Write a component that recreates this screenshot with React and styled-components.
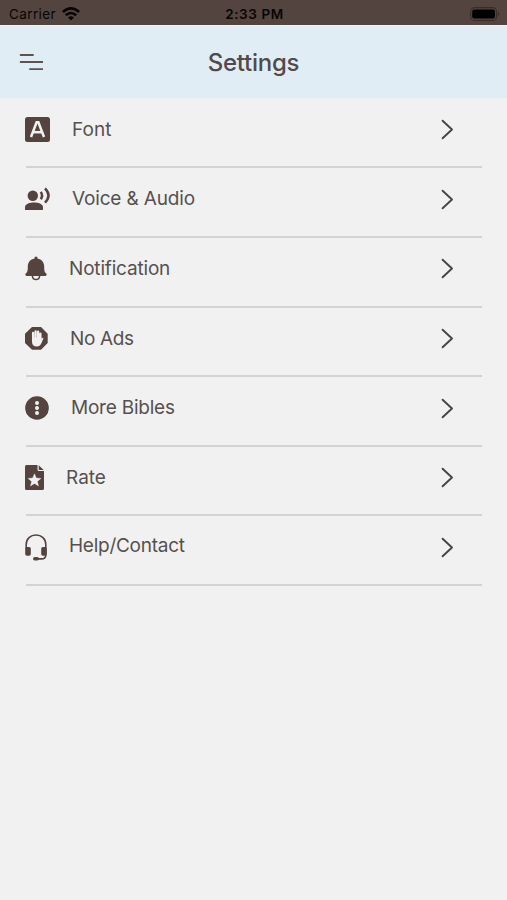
import React from 'react';
import styled, { createGlobalStyle } from 'styled-components';

const items = [
    { label: 'Font', icon: FontIcon, width: 25, spacing: 0.05 },
    { label: 'Voice & Audio', icon: VoiceIcon, width: 25, spacing: -0.16 },
    { label: 'Notification', icon: BellIcon, width: 22, spacing: -0.18 },
    { label: 'No Ads', icon: HandIcon, width: 23, spacing: -0.35 },
    { label: 'More Bibles', icon: MoreIcon, width: 24, spacing: -0.22 },
    { label: 'Rate', icon: RateIcon, width: 19, spacing: 0 },
    { label: 'Help/Contact', icon: HeadsetIcon, width: 22, spacing: -0.26, lift: 3 },
];

function FontIcon() {
    return (
        <svg width="25" height="25" viewBox="0 0 25 25">
            <rect width="25" height="25" rx="2.5" fill="#54433f" />
            <g fill="none" stroke="#f1f1f1" strokeWidth="2.5">
                <path d="M6 20 L11.6 5.3 H13.4 L19 20" />
                <path d="M8.2 15.2 H16.8" />
            </g>
        </svg>
    );
}

function VoiceIcon() {
    return (
        <svg width="25" height="25" viewBox="0 0 25 25">
            <circle cx="7.8" cy="8.7" r="5.2" fill="#54433f" />
            <path d="M0 23 V20.2 C0 16.8 5.2 15.6 9 15.6 S18 16.8 18 20.2 V23 Z" fill="#54433f" />
            <g fill="none" stroke="#54433f" strokeWidth="2.5">
                <path d="M15.8 4.9 Q18.3 8.5 15.8 12.2" />
                <path d="M20 1.4 Q27 8.5 20 15.6" />
            </g>
        </svg>
    );
}

function BellIcon() {
    return (
        <svg width="22" height="25" viewBox="0 0 22 25">
            <path
                d="M11 .6 C12 .6 12.5 1.4 12.5 2.4 C16.8 3.1 19.2 6.4 19.2 10.5 C19.2 15 19.7 16.2 21.2 17.5 C22.2 18.5 21.5 20 20.3 20 H1.7 C.5 20 -.2 18.5 .8 17.5 C2.3 16.2 2.8 15 2.8 10.5 C2.8 6.4 5.2 3.1 9.5 2.4 C9.5 1.4 10 .6 11 .6 Z"
                fill="#54433f"
            />
            <path d="M7.4 20 C7.6 24.7 14.4 24.7 14.6 20" fill="none" stroke="#54433f" strokeWidth="1.5" />
        </svg>
    );
}

function HandIcon() {
    return (
        <svg width="23" height="23" viewBox="0 0 23 23">
            <path d="M7 0 H16 L22.7 6.7 V16 L16 22.7 H7 L0 16 V6.7 Z" fill="#54433f" />
            <path
                d="M8.1 6 V13 M10.6 4.5 V13 M13.1 4.7 V13 M15.4 6.7 V14"
                stroke="#f1f1f1"
                strokeWidth="2.3"
                strokeLinecap="round"
            />
            <path
                d="M7 10.5 H16.5 V13.6 L17 11.3 Q18 10.2 18.5 11.3 L16.5 16 Q15 19.5 11.8 19.5 Q7 19.5 7 14.5 Z"
                fill="#f1f1f1"
            />
        </svg>
    );
}

function MoreIcon() {
    return (
        <svg width="24" height="24" viewBox="0 0 24 24">
            <circle cx="12" cy="12" r="11.8" fill="#54433f" />
            <g fill="#f1f1f1">
                <circle cx="12" cy="6.9" r="2" />
                <circle cx="12" cy="12" r="2" />
                <circle cx="12" cy="17.1" r="2" />
            </g>
        </svg>
    );
}

function RateIcon() {
    return (
        <svg width="19" height="25" viewBox="0 0 19 25">
            <path d="M1.5 0 H12.5 V4.5 Q12.5 6 14 6 H19 V23.5 Q19 25 17.5 25 H1.5 Q0 25 0 23.5 V1.5 Q0 0 1.5 0 Z" fill="#54433f" />
            <path d="M13.7 .3 L18.7 5 H14.5 Q13.7 5 13.7 4.2 Z" fill="#54433f" />
            <path
                d="M9.5 8.8 L11.3 13 L15.9 13.4 L12.4 16.4 L13.5 20.9 L9.5 18.5 L5.5 20.9 L6.6 16.4 L3.1 13.4 L7.7 13 Z"
                fill="#f1f1f1"
                stroke="#f1f1f1"
                strokeWidth=".4"
                strokeLinejoin="round"
            />
        </svg>
    );
}

function HeadsetIcon() {
    return (
        <svg width="22" height="27" viewBox="0 0 22 27">
            <path
                d="M1.2 15 V10.5 C1.2 5 5.5 1 11 1 S20.8 5 20.8 10.5 V21 Q20.8 24.9 16.5 24.9 H11"
                fill="none"
                stroke="#54433f"
                strokeWidth="1.6"
            />
            <rect x="0.2" y="13" width="5.6" height="8.8" rx="1.7" fill="#54433f" />
            <rect x="16.2" y="13" width="5.6" height="8.8" rx="1.7" fill="#54433f" />
            <rect x="8" y="23" width="6" height="3.6" rx="1.8" fill="#54433f" />
        </svg>
    );
}

const App = () => {
    return (
        <Screen>
            <GlobalStyle />
            <StatusBar>
                <Carrier>
                    <span>Carrier</span>
                    <svg width="18" height="14" viewBox="0 0 18 14">
                        <g fill="none" stroke="#080504" strokeWidth="2.6">
                            <path d="M.9 5 Q9 -2.2 17.1 5" />
                            <path d="M3.8 8.3 Q9 3.7 14.2 8.3" />
                        </g>
                        <path d="M6.1 10.4 Q9 8 11.9 10.4 L9 13.4 Z" fill="#080504" />
                    </svg>
                </Carrier>
                <Clock>2:33 PM</Clock>
                <Battery>
                    <svg width="30" height="14" viewBox="0 0 30 14">
                        <rect x=".6" y=".6" width="26" height="12.8" rx="4" fill="none" stroke="#382d29" strokeWidth="1.1" />
                        <rect x="2.2" y="2.4" width="22.8" height="9.2" rx="2" fill="#000" />
                        <path d="M28 4.8 Q30.4 7 28 9.2 Z" fill="#382d29" />
                    </svg>
                </Battery>
            </StatusBar>
            <Header>
                <MenuButton aria-label="Menu">
                    <svg width="24" height="18" viewBox="0 0 24 18">
                        <path
                            d="M1.6 2 H14 M1.6 9 H23.6 M11 16.2 H23.6"
                            stroke="#5d5252"
                            strokeWidth="1.8"
                            strokeLinecap="round"
                        />
                    </svg>
                </MenuButton>
                <Title>Settings</Title>
            </Header>
            <List>
                {items.map(({ label, icon: Icon, width, spacing, lift }) => (
                    <Row key={label}>
                        <IconBox $width={width}>
                            <Icon />
                        </IconBox>
                        <Label $spacing={spacing} $lift={lift}>{label}</Label>
                        <Chevron width="13" height="21" viewBox="0 0 13 21">
                            <path
                                d="M1.6 1.7 L11 10.5 L1.6 19.3"
                                fill="none"
                                stroke="#494443"
                                strokeWidth="1.9"
                                strokeLinecap="round"
                                strokeLinejoin="round"
                            />
                        </Chevron>
                    </Row>
                ))}
            </List>
        </Screen>
    );
};

// Styled components
const GlobalStyle = createGlobalStyle`
  body {
    margin: 0;
    background: #f1f1f1;
  }
`;

const Screen = styled.div`
  min-height: 100vh;
  background: #f1f1f1;
  font-family: Inter, sans-serif;
`;

const StatusBar = styled.div`
  display: grid;
  grid-template-columns: 1fr auto 1fr;
  align-items: center;
  height: 25px;
  padding: 2px 7px 0 9px;
  box-sizing: border-box;
  background: #54443f;
  color: #080504;
  font-size: 13.5px;
`;

const Carrier = styled.div`
  display: flex;
  align-items: center;
  gap: 6px;
  letter-spacing: 0.38px;
`;

const Clock = styled.div`
  font-weight: 600;
  letter-spacing: 0.6px;
`;

const Battery = styled.div`
  display: flex;
  justify-content: flex-end;
`;

const Header = styled.header`
  display: grid;
  grid-template-columns: 1fr auto 1fr;
  align-items: center;
  height: 73px;
  padding: 0 19px;
  box-sizing: border-box;
  border-top: 1px solid #eef2f4;
  background: #e0edf5;
`;

const MenuButton = styled.button`
  display: flex;
  padding: 0;
  border: none;
  background: none;
`;

const Title = styled.h1`
  margin: 0;
  color: #51494a;
  font-size: 24px;
  font-weight: 500;
  letter-spacing: -0.25px;
`;

const List = styled.div`
  padding: 0.6px 25px 0 26px;
`;

const Row = styled.div`
  display: flex;
  align-items: center;
  height: 69.65px;
  padding: 0 28px 5.6px 0;
  box-sizing: border-box;
  border-bottom: 2px solid #d3d3d3;
`;

const IconBox = styled.div`
  display: flex;
  flex: none;
  width: ${({ $width }) => $width}px;
  margin: 0 22px 0 -1px;
`;

const Label = styled.span`
  flex: 1;
  padding-bottom: ${({ $lift }) => $lift || 0}px;
  color: #57504e;
  font-size: 19px;
  line-height: 24px;
  letter-spacing: ${({ $spacing }) => $spacing}px;
`;

const Chevron = styled.svg`
  flex: none;
`;

export default App;
